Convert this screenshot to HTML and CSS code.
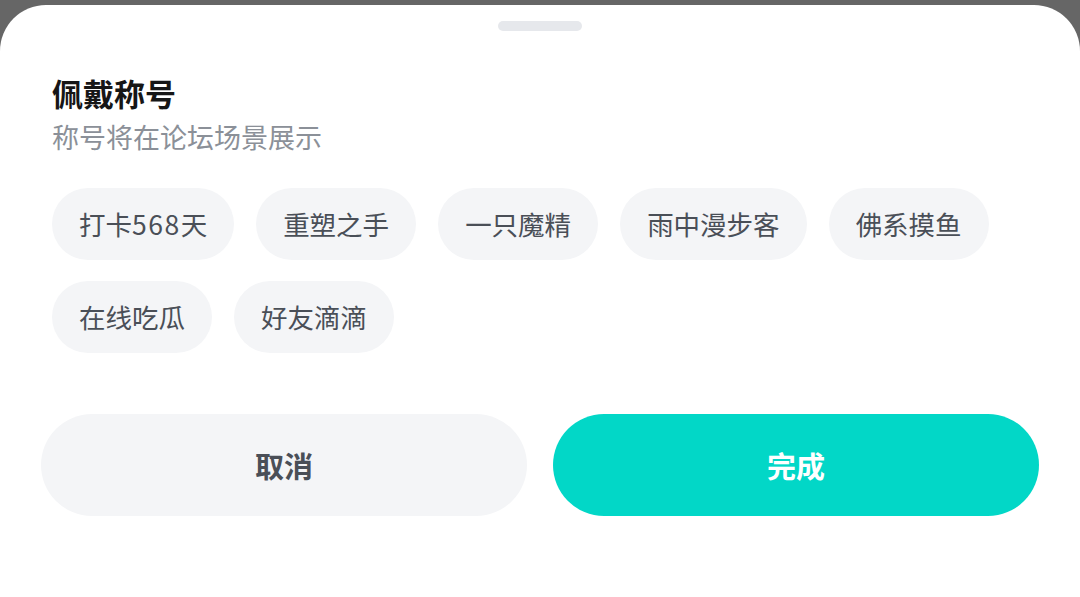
FILE: index.html
```html
<!DOCTYPE html>
<html lang="zh-CN">
<head>
    <meta charset="UTF-8">
    <meta name="viewport" content="width=device-width, initial-scale=1.0">
    <title>佩戴称号</title>
    <link rel="stylesheet" href="styles.css">
</head>
<body>

    <div class="sheet">
        <div class="handle"></div>

        <div class="content">
            <h1 class="title">佩戴称号</h1>
            <p class="subtitle">称号将在论坛场景展示</p>

            <div class="chips">
                <span class="chip">打卡<span class="num">568</span>天</span>
                <span class="chip">重塑之手</span>
                <span class="chip">一只魔精</span>
                <span class="chip">雨中漫步客</span>
                <span class="chip">佛系摸鱼</span>
                <span class="chip">在线吃瓜</span>
                <span class="chip">好友滴滴</span>
            </div>
        </div>

        <div class="actions">
            <button class="btn cancel">取消</button>
            <button class="btn done">完成</button>
        </div>
    </div>

</body>
</html>
```

FILE: styles.css
```css
body {
    margin: 0;
    background: #666666;
    font-family: "Noto Sans CJK SC", "Noto Sans", sans-serif;
    height: 597px;
    overflow: hidden;
}

.sheet {
    margin-top: 5px;
    background: #fff;
    border-radius: 46px 46px 0 0;
    height: 592px;
    padding-top: 16px;
    box-sizing: border-box;
}

.handle {
    width: 84px;
    height: 10px;
    border-radius: 5px;
    background: #e6e8ec;
    margin: 0 auto;
}

.content {
    padding: 0 52px;
}

.title {
    margin: 40px 0 0;
    font-size: 31px;
    line-height: 44px;
    font-weight: 700;
    color: #161616;
}

.subtitle {
    margin: 3px 0 0;
    font-size: 27px;
    line-height: 38px;
    color: #8b9098;
}

.chips {
    display: flex;
    flex-wrap: wrap;
    gap: 21px 22px;
    margin-top: 32px;
}

.chip {
    height: 72px;
    line-height: 71px;
    padding: 0 27px;
    border-radius: 36px;
    background: #f4f5f7;
    color: #4a4f57;
    font-size: 26.5px;
}

.chip .num {
    letter-spacing: 1.5px;
}

.actions {
    display: flex;
    gap: 26px;
    padding: 0 41px;
    margin-top: 61px;
}

.btn {
    flex: 1;
    height: 102px;
    border: none;
    border-radius: 51px;
    font-family: inherit;
    font-size: 29px;
    font-weight: 700;
    cursor: pointer;
}

.cancel {
    background: #f4f5f7;
    color: #4a4f57;
}

.done {
    background: #02d7c7;
    color: #fff;
}
```
